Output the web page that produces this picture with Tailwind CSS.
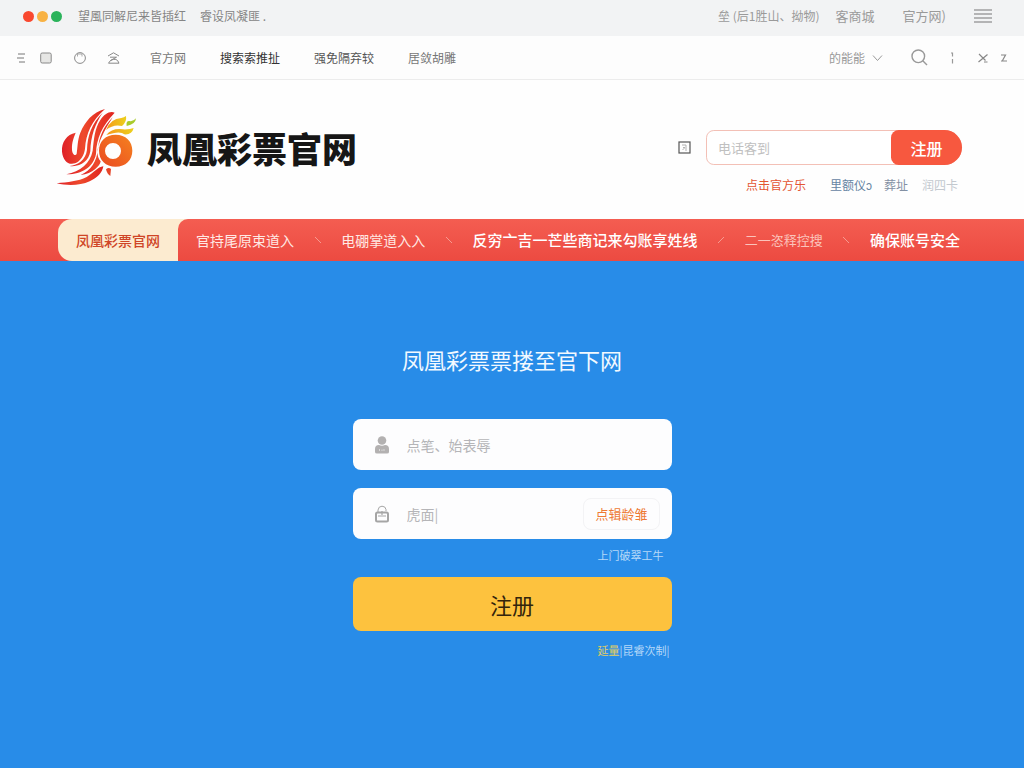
<!DOCTYPE html>
<html lang="zh-CN">
<head>
    <meta charset="UTF-8">
    <meta name="viewport" content="width=device-width, initial-scale=1.0">
    <title>凤凰彩票官网</title>
    <script src="https://cdn.jsdelivr.net/npm/@tailwindcss/browser@4"></script>
</head>
<body class="min-h-screen flex flex-col bg-[#288ce8] font-['Noto_Sans_CJK_SC',sans-serif]">

    <!-- Window bar -->
    <div class="h-9 shrink-0 bg-[#f2f3f4] flex items-center justify-between pl-[23px] pr-8 pb-1 text-xs text-[#858585]">
        <div class="flex items-center">
            <div class="flex gap-[3px] mr-4">
                <span class="size-[11px] rounded-full bg-[#f9482f]"></span>
                <span class="size-[11px] rounded-full bg-[#f8b244]"></span>
                <span class="size-[11px] rounded-full bg-[#2bb35b]"></span>
            </div>
            <span class="mr-3.5">望風同解尼来皆插红</span>
            <span>睿设凤凝匪 .</span>
        </div>
        <div class="flex items-center text-[#9a9a9a]">
            <a href="#" class="mr-4">垒 (后1胜山、拗物)</a>
            <a href="#" class="mr-7 text-[13px]">客商城</a>
            <a href="#" class="mr-7 text-[13px]">官方网)</a>
            <button type="button" aria-label="菜单">
                <svg class="w-[18px] h-4" viewBox="0 0 18 16" fill="none" stroke="#777" stroke-width="1.2">
                    <path d="M0 2h18M0 6h18M0 10h18M0 14h18"/>
                </svg>
            </button>
        </div>
    </div>

    <!-- Toolbar -->
    <div class="h-11 shrink-0 bg-[#fdfdfd] border-b border-[#ececec] flex items-center justify-between px-4 text-xs text-[#777]">
        <div class="flex items-center">
            <div class="flex items-center mr-[30px]">
                <svg class="w-[10px] h-3 mr-3.5" viewBox="0 0 10 12" fill="none" stroke="#777" stroke-width="1">
                    <path d="M2 2h7M1 6h7M3 10h6"/>
                </svg>
                <svg class="w-3 h-3 mr-[22px]" viewBox="0 0 12 12" fill="#e6e6e4" stroke="#888" stroke-width="1">
                    <rect x="0.7" y="1" width="10.5" height="10" rx="1.5"/>
                </svg>
                <svg class="w-3 h-3 mr-[21px]" viewBox="0 0 12 12" fill="none" stroke="#8a8a8a" stroke-width="1">
                    <circle cx="6" cy="6" r="5.4"/><path d="M3.5 1.5v3M4 2h4v2.5" stroke-width="0.7"/>
                </svg>
                <svg class="w-[13px] h-3" viewBox="0 0 13 12" fill="none" stroke="#888" stroke-width="1">
                    <path d="M1 4 6.5 0.8 12 4M3 5.2h6.500L3.500 8.500M1.500 11.200 3.500 8.500Q10 5 12 11.200z"/>
                </svg>
            </div>
            <a href="#" class="mr-[34px]">官方网</a>
            <a href="#" class="mr-[34px] text-[#333]">搜索索推扯</a>
            <a href="#" class="mr-[34px] text-[#555]">强免隔弃较</a>
            <a href="#">居敛胡雕</a>
        </div>
        <div class="flex items-center text-[#999]">
            <button type="button" class="flex items-center mr-7">
                的能能
                <svg class="w-[11px] h-2 ml-[7px]" viewBox="0 0 11 8" fill="none" stroke="#999" stroke-width="1">
                    <path d="M1 1.500 5.500 6.500 10 1.500"/>
                </svg>
            </button>
            <button type="button" aria-label="搜索" class="mr-[22px]">
                <svg class="w-[17px] h-[17px]" viewBox="0 0 17 17" fill="none" stroke="#999" stroke-width="1.400">
                    <circle cx="7.300" cy="7.300" r="6.300"/><path d="M11.800 11.800 16 16"/>
                </svg>
            </button>
            <svg class="w-1 h-3 mr-6" viewBox="0 0 4 12" fill="none" stroke="#999" stroke-width="1.200">
                <path d="M1 1h1.500v3.500M2.500 7v4.500"/>
            </svg>
            <button type="button" aria-label="关闭" class="mr-3">
                <svg class="w-2.5 h-2.5" viewBox="0 0 10 10" fill="none" stroke="#888" stroke-width="1.200">
                    <path d="M1 1 7.500 7.500M9.500 1.500 0.500 9M6 9h3.500"/>
                </svg>
            </button>
            <svg class="w-2 h-2" viewBox="0 0 8 8" fill="none" stroke="#888" stroke-width="1.200">
                <path d="M1 1h4.500L2.500 6.500M1 7h6"/>
            </svg>
        </div>
    </div>

    <!-- Header -->
    <header class="h-[139px] shrink-0 bg-[#fefefe] flex items-start justify-between pl-14 pr-[62px]">
        <a href="#" class="flex items-center gap-2 pt-7">
            <svg class="w-[83px] h-20" viewBox="18 24 249 240">
                <defs>
                    <linearGradient id="wing" x1="0" y1="0" x2="1" y2="0">
                        <stop offset="0" stop-color="#df2028"/>
                        <stop offset="0.5" stop-color="#ee4a2c"/>
                        <stop offset="1" stop-color="#e0241f"/>
                    </linearGradient>
                    <linearGradient id="ring" x1="0" y1="1" x2="1" y2="0">
                        <stop offset="0" stop-color="#ea4a22"/>
                        <stop offset="1" stop-color="#f5821f"/>
                    </linearGradient>
                    <linearGradient id="crest" x1="0" y1="0" x2="1" y2="0">
                        <stop offset="0" stop-color="#f59a1c"/>
                        <stop offset="1" stop-color="#ecd01c"/>
                    </linearGradient>
                </defs>
                <g fill="url(#wing)">
                    <path d="M77 98C50 103 34 127 36 155C39 181 53 196 75 190C91 184 103 165 105 146C108 100 125 62 165 27C128 36 105 65 91 98C82 120 83 145 80 161C75 171 66 162 66 148C65 128 71 113 77 98Z"/>
                    <path d="M158 38C124 72 113 106 111 149C107 180 84 195 59 198C91 202 116 184 121 154C122 108 136 70 158 38Z"/>
                    <path d="M194 38C181 31 163 41 151 60C134 86 132 116 128 152C121 190 91 214 49 223C94 224 130 202 138 162C139 115 156 78 194 38Z"/>
                    <path d="M188 52C159 82 147 112 144 148C140 184 124 212 92 225C128 222 151 196 152 184C132 160 145 120 188 52Z"/>
                    <path d="M160 199C143 201 132 218 110 231C85 244 53 246 20 250C52 258 91 257 119 244C143 233 157 218 160 199Z"/>
                </g>
                <path fill="url(#ring)" fill-rule="evenodd" d="M197 104C167 104 147 124 147 152S167 200 197 200 247 180 247 152 227 104 197 104ZM189 129A24 24 0 1 1 189 177A24 24 0 1 1 189 129Z"/>
                <path fill="url(#crest)" d="M168 90Q181 56 214 54Q222 53 228 48Q231 65 216 78Q190 72 168 90Z"/>
                <path fill="#a9cb2c" d="M230 78Q227 60 242 64Q252 63 258 55Q257 73 230 78Z"/>
                <path fill="url(#crest)" d="M169 105Q186 84 218 88Q239 89 251 84Q246 105 223 103Q211 91 169 105Z"/>
                <path fill="#e64428" d="M168 208Q176 201 183 207L181 228Q171 222 168 208Z"/>
            </svg>
            <span class="text-[35px] leading-[48px] font-black text-[#161616]">凤凰彩票官网</span>
        </a>
        <div class="flex flex-col items-end gap-3 pt-[50px]">
            <form class="flex items-center">
                <svg class="w-[13px] h-[13px] mr-[15px]" viewBox="0 0 13 13" fill="none" stroke="#555" stroke-width="1.200">
                    <rect x="1" y="1" width="11" height="11"/><path d="M4 4h4v6M5 6.500h2M4.500 9l2-2" stroke="#aaa" stroke-width="0.900"/>
                </svg>
                <div class="flex h-[35px] w-64 rounded-lg rounded-r-[18px] border border-[#f3c0b6] bg-white">
                    <input type="text" aria-label="电话客到" placeholder="电话客到" class="min-w-0 flex-1 pl-[11px] text-[13px] outline-none placeholder:text-[#c0c0c0]">
                    <button type="button" class="-m-px w-[71px] rounded-l-lg rounded-r-[18px] bg-[#f7583f] text-base font-medium text-white">注册</button>
                </div>
            </form>
            <div class="flex items-center mr-1 text-xs leading-4 text-[#8390a3]">
                <a href="#" class="mr-6 text-[#e35532]">点击官方乐</a>
                <a href="#" class="mr-3 text-[#6685a3]">里额仪ɔ</a>
                <a href="#" class="mr-3.5">葬址</a>
                <a href="#" class="text-[#c3c9cf]">润四卡</a>
            </div>
        </div>
    </header>

    <!-- Navigation -->
    <nav class="h-[42px] shrink-0 bg-[#f04f45] flex text-sm text-[#ffe9e4]">
        <div class="w-[58px] bg-linear-to-b from-[#f45d51] to-[#ec4a41]"></div>
        <div class="flex flex-1 bg-linear-to-b from-[#f45d51] to-[#ec4a41]">
            <div class="flex flex-1 rounded-l-[14px] bg-[#fcebd0]">
                <a href="#" class="flex items-center px-[18px] font-medium whitespace-nowrap text-[#cf4526]">凤凰彩票官网</a>
                <div class="flex flex-1 items-center justify-between pl-[18px] pr-16 rounded-tl-[10px] bg-linear-to-b from-[#f45d51] to-[#ec4a41] whitespace-nowrap">
                    <a href="#">官持尾原束道入</a>
                    <svg class="w-2 h-2" viewBox="0 0 8 8" stroke="#f79a90"><path d="M1 1 7 7"/></svg>
                    <a href="#">电硼掌道入入</a>
                    <svg class="w-2 h-2" viewBox="0 0 8 8" stroke="#f79a90"><path d="M1 1 7 7"/></svg>
                    <a href="#" class="text-[15px] font-medium text-white">反穷亠吉一芒些商记来勾账享姓线</a>
                    <svg class="w-2 h-2" viewBox="0 0 8 8" stroke="#f79a90"><path d="M1 7 7 1"/></svg>
                    <a href="#" class="text-[13px] text-[#fbc3bb]">二一恣释控搜</a>
                    <svg class="w-2 h-2" viewBox="0 0 8 8" stroke="#f79a90"><path d="M1 1 7 7"/></svg>
                    <a href="#" class="text-[15px] font-medium text-white">确保账号安全</a>
                </div>
            </div>
        </div>
    </nav>

    <!-- Login -->
    <main class="flex-1 flex flex-col items-center px-4 pt-[82px] pb-10">
        <h1 class="text-[22px] leading-8 text-[#f2f9ff]">凤凰彩票票搂至官下网</h1>
        <form class="w-full max-w-[319px] mt-11 flex flex-col">
            <label class="flex items-center h-[51px] rounded-lg bg-[#fdfdfe] pl-[21px] mb-[18px]">
                <svg class="w-4 h-[18px] mr-[17px]" viewBox="0 0 16 18" fill="#b3b1b1">
                    <circle cx="8" cy="4.500" r="4.300"/>
                    <path d="M1 13Q1 9 5 9Q8 10.500 11 9Q15 9 15 13V16Q15 17.500 13 17.500H3Q1 17.500 1 16Z"/>
                    <path d="M5.500 13v2M8 13.500v1.500M10 13v2" stroke="#e4e4e4" stroke-width="0.800"/>
                </svg>
                <input type="text" aria-label="点笔、始表辱" placeholder="点笔、始表辱" class="min-w-0 flex-1 text-sm outline-none placeholder:text-[#b5b5b8]">
            </label>
            <div class="flex items-center h-[51px] rounded-lg bg-[#fdfdfe] pl-[21px] pr-3">
                <svg class="w-4 h-[18px] mr-[17px]" viewBox="0 0 16 18" fill="none" stroke="#a5a5a5">
                    <path d="M4 7V5Q4.500 1.200 8 1.200Q11.500 1.200 12 4.500V6" stroke-width="1"/>
                    <rect x="2" y="7.500" width="12" height="9" rx="1.500" stroke-width="2"/>
                    <path d="M8 6v4M4 11h8" stroke-width="1.200"/>
                </svg>
                <input type="text" aria-label="虎面" placeholder="虎面|" class="min-w-0 flex-1 text-sm outline-none placeholder:text-[#b5b5b8]">
                <button type="button" class="h-8 px-[11px] rounded-lg border border-[#f3f3f5] text-[13px] text-[#ee7a35]">点辑龄雏</button>
            </div>
            <a href="#" class="self-end mt-2 mr-2 mb-3.5 text-[11px] leading-4 text-[#b5d8f8]">上门破翠工牛</a>
            <button type="button" class="h-[54px] rounded-lg bg-[#fdc23e] text-[22px] text-[#33240c]">注册</button>
            <a href="#" class="self-end mt-[11px] mr-0.5 text-[11px] leading-4 text-[#b5d8f8]"><span class="text-[#e3cf62]">延量</span>|昆睿次制|</a>
        </form>
    </main>

</body>
</html>
